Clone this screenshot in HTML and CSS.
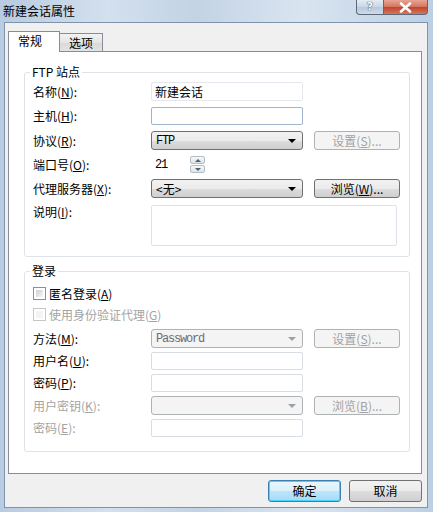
FILE: index.html
```html
<!DOCTYPE html>
<html lang="zh-CN">
<head>
    <meta charset="UTF-8">
    <title>新建会话属性</title>
    <link rel="stylesheet" href="styles.css">
</head>
<body>
    <div class="window">
        <div class="titlebar">
            <span class="title">新建会话属性</span>
            <div class="caption">
                <span class="cap-help">?</span>
                <span class="cap-close">
                    <svg width="13" height="11" viewBox="0 0 13 11"><path d="M2 1.5 L11 9.5 M11 1.5 L2 9.5" stroke="#fff" stroke-width="2.6" stroke-linecap="round"/></svg>
                </span>
            </div>
        </div>

        <div class="client">
            <div class="tabs">
                <div class="tab active">常规</div>
                <div class="tab">选项</div>
            </div>

            <div class="panel">
                <fieldset class="group">
                    <legend>FTP 站点</legend>
                    <div class="form-grid">
                        <span class="label">名称(<u>N</u>):</span>
                        <div class="edit name">新建会话</div>
                        <span></span>

                        <span class="label">主机(<u>H</u>):</span>
                        <div class="edit host"></div>
                        <span></span>

                        <span class="label">协议(<u>R</u>):</span>
                        <div class="combo"><span class="mono">FTP</span><i class="arrow"></i></div>
                        <div class="btn disabled">设置(<u>S</u>)...</div>

                        <span class="label">端口号(<u>O</u>):</span>
                        <div class="port">
                            <div class="edit port-edit"><span class="mono">21</span></div>
                            <div class="spin">
                                <span class="spin-up"></span>
                                <span class="spin-down"></span>
                            </div>
                        </div>
                        <span></span>

                        <span class="label">代理服务器(<u>X</u>):</span>
                        <div class="combo"><span>&lt;无&gt;</span><i class="arrow"></i></div>
                        <div class="btn">浏览(<u>W</u>)...</div>

                        <span class="label top">说明(<u>I</u>):</span>
                        <div class="memo"></div>
                    </div>
                </fieldset>

                <fieldset class="group login">
                    <legend>登录</legend>
                    <div class="form-grid">
                        <div class="check-row">
                            <span class="checkbox"></span>
                            <span>匿名登录(<u>A</u>)</span>
                        </div>
                        <div class="check-row off">
                            <span class="checkbox"></span>
                            <span>使用身份验证代理(<u>G</u>)</span>
                        </div>

                        <span class="label">方法(<u>M</u>):</span>
                        <div class="combo disabled"><span class="mono">Password</span><i class="arrow"></i></div>
                        <div class="btn disabled">设置(<u>S</u>)...</div>

                        <span class="label">用户名(<u>U</u>):</span>
                        <div class="edit dim"></div>
                        <span></span>

                        <span class="label">密码(<u>P</u>):</span>
                        <div class="edit dim"></div>
                        <span></span>

                        <span class="label off">用户密钥(<u>K</u>):</span>
                        <div class="combo disabled"><span></span><i class="arrow"></i></div>
                        <div class="btn disabled">浏览(<u>B</u>)...</div>

                        <span class="label off">密码(<u>E</u>):</span>
                        <div class="edit"></div>
                        <span></span>
                    </div>
                </fieldset>
            </div>

            <div class="dialog-buttons">
                <div class="btn push default">确定</div>
                <div class="btn push">取消</div>
            </div>
        </div>
    </div>
</body>
</html>
```

FILE: styles.css
```css
body {
    margin: 0;
    font-family: "Noto Sans CJK SC", "Liberation Sans", sans-serif;
    font-size: 12px;
    line-height: 16px;
    color: #000;
}
u {
    text-decoration: underline;
    text-underline-offset: 1px;
}
.window {
    width: 433px;
    height: 512px;
    box-sizing: border-box;
    padding: 0 5px 4px 4px;
    display: flex;
    flex-direction: column;
    background: linear-gradient(90deg, #b8cbe0 0%, #d3e0ee 25%, #c3d3e5 45%, #d9e4f0 70%, #bccfe3 100%);
}
.titlebar {
    height: 22px;
    flex: none;
    display: flex;
    align-items: flex-start;
}
.title {
    margin-top: 3px;
    margin-left: -1px;
}
.caption {
    margin-left: auto;
    display: flex;
}
.cap-help,
.cap-close {
    height: 15px;
    box-sizing: border-box;
    display: flex;
    align-items: center;
    justify-content: center;
    border: 1px solid #5d6878;
    border-top: none;
}
.cap-help {
    width: 27px;
    border-radius: 0 0 0 4px;
    border-right: none;
    background: linear-gradient(#e3ebf4, #c9d6e5 50%, #b7c8dc 51%, #cfdbe8);
    font-family: "DejaVu Sans", sans-serif;
    font-size: 11px;
    font-weight: bold;
    color: #fff;
    text-shadow: 0 0 1px #324153, 0 0 1px #324153;
}
.cap-close {
    width: 45px;
    border-radius: 0 0 4px 0;
    background: linear-gradient(#e8a493, #d4735f 50%, #c0432d 51%, #d5765e);
}
.client {
    flex: 1;
    background: #f0f0f0;
    border: 1px solid #7f93ad;
    padding: 8px 5px 0 3px;
    display: flex;
    flex-direction: column;
}
.tabs {
    height: 20px;
    display: flex;
    align-items: flex-end;
}
.tab {
    height: 18px;
    box-sizing: border-box;
    padding: 1px 9px 0 9px;
    border: 1px solid #898c95;
    border-bottom: none;
    border-left: none;
    background: linear-gradient(#f3f3f3, #e5e5e5 50%, #d9d9d9 51%, #e3e3e3);
}
.tab.active {
    height: 21px;
    width: 52px;
    margin-bottom: -1px;
    padding-top: 1px;
    border-left: 1px solid #898c95;
    background: #fff;
    position: relative;
    z-index: 1;
}
.panel {
    height: 423px;
    box-sizing: border-box;
    background: #fff;
    border: 1px solid #898c95;
    padding-top: 12px;
}
.group {
    margin: 0 12px 0 15px;
    padding: 2px 9px 10px 8px;
    border: 1px solid #dde3e9;
    border-radius: 3px;
}
.group legend {
    margin-left: -3px;
    padding: 0 2px;
    line-height: 16px;
}
.group.login {
    margin-top: 6px;
    padding: 4px 9px 14px 8px;
}
.form-grid {
    display: grid;
    grid-template-columns: 107px 152px 86px;
    column-gap: 11px;
    row-gap: 6px;
    align-items: center;
}
.login .form-grid {
    row-gap: 4px;
}
.label.top {
    align-self: start;
}
.off {
    color: #a3a3a3;
}
.edit {
    height: 19px;
    box-sizing: border-box;
    border: 1px solid #b5bcc6;
    border-top-color: #aab0ba;
    border-radius: 2px;
    padding: 0 3px;
    display: flex;
    align-items: center;
    background: #fff;
}
.edit.name {
    border-color: #e4e8ee;
}
.edit.host {
    height: 18px;
    border-color: #9fb4cc;
}
.login .edit {
    height: 18px;
    border-color: #d8dde3;
}
.mono {
    font-family: "Liberation Mono", monospace;
    font-size: 12px;
    letter-spacing: -1.2px;
}
.combo {
    height: 19px;
    box-sizing: border-box;
    border: 1px solid #707070;
    border-radius: 3px;
    padding: 0 6px 0 4px;
    display: flex;
    align-items: center;
    background: linear-gradient(#f2f2f2, #ebebeb 50%, #dddddd 51%, #cfcfcf);
}
.combo .arrow {
    margin-left: auto;
    width: 0;
    height: 0;
    border-left: 4px solid transparent;
    border-right: 4px solid transparent;
    border-top: 4px solid #000;
}
.combo.disabled {
    border-color: #adb2b5;
    background: #f4f4f4;
    color: #6d6d6d;
}
.combo.disabled .arrow {
    border-top-color: #a0a0a0;
}
.btn {
    height: 19px;
    box-sizing: border-box;
    border: 1px solid #707070;
    border-radius: 3px;
    display: flex;
    align-items: center;
    justify-content: center;
    background: linear-gradient(#f2f2f2, #ebebeb 50%, #dddddd 51%, #cfcfcf);
}
.btn.disabled {
    border-color: #adb2b5;
    background: #f4f4f4;
    color: #a3a3a3;
}
.port {
    display: flex;
    height: 17px;
}
.port-edit {
    width: 39px;
    height: 17px;
    border-color: #fff;
}
.spin {
    width: 15px;
    display: flex;
    flex-direction: column;
    gap: 1px;
}
.spin span {
    flex: 1;
    border: 1px solid #b4bdc6;
    border-radius: 2px;
    background: linear-gradient(#f6f7f8, #dfe3e7);
    display: flex;
    align-items: center;
    justify-content: center;
}
.spin-up::after,
.spin-down::after {
    content: "";
    border-left: 3px solid transparent;
    border-right: 3px solid transparent;
}
.spin-up::after {
    border-bottom: 3px solid #4c607a;
}
.spin-down::after {
    border-top: 3px solid #4c607a;
}
.memo {
    grid-column: 2 / 4;
    height: 41px;
    margin: 1px 3px 0 0;
    box-sizing: border-box;
    border: 1px solid #dde3e9;
    border-radius: 2px;
}
.check-row {
    grid-column: 1 / 4;
    height: 21px;
    display: flex;
    align-items: center;
    gap: 3px;
}
.login .check-row + .check-row {
    margin-top: -4px;
}
.checkbox {
    width: 13px;
    height: 13px;
    box-sizing: border-box;
    border: 1px solid #8f8f8f;
    background: #fff;
    padding: 2px;
    display: flex;
}
.checkbox::after {
    content: "";
    flex: 1;
    background: linear-gradient(135deg, #cbcfd5, #f6f6f6);
}
.check-row.off .checkbox {
    border-color: #c7c7c7;
}
.check-row.off .checkbox::after {
    background: #f4f4f4;
}
.dialog-buttons {
    margin-top: 6px;
    display: flex;
    justify-content: flex-end;
    gap: 8px;
}
.btn.push {
    width: 73px;
    height: 22px;
}
.btn.default {
    border-color: #3c7fb1;
    background: linear-gradient(#eaf6fd, #d9f0fc 50%, #bee6fd 51%, #a7d9f5);
    box-shadow: inset 0 0 0 1px #48d3fb;
}
```
